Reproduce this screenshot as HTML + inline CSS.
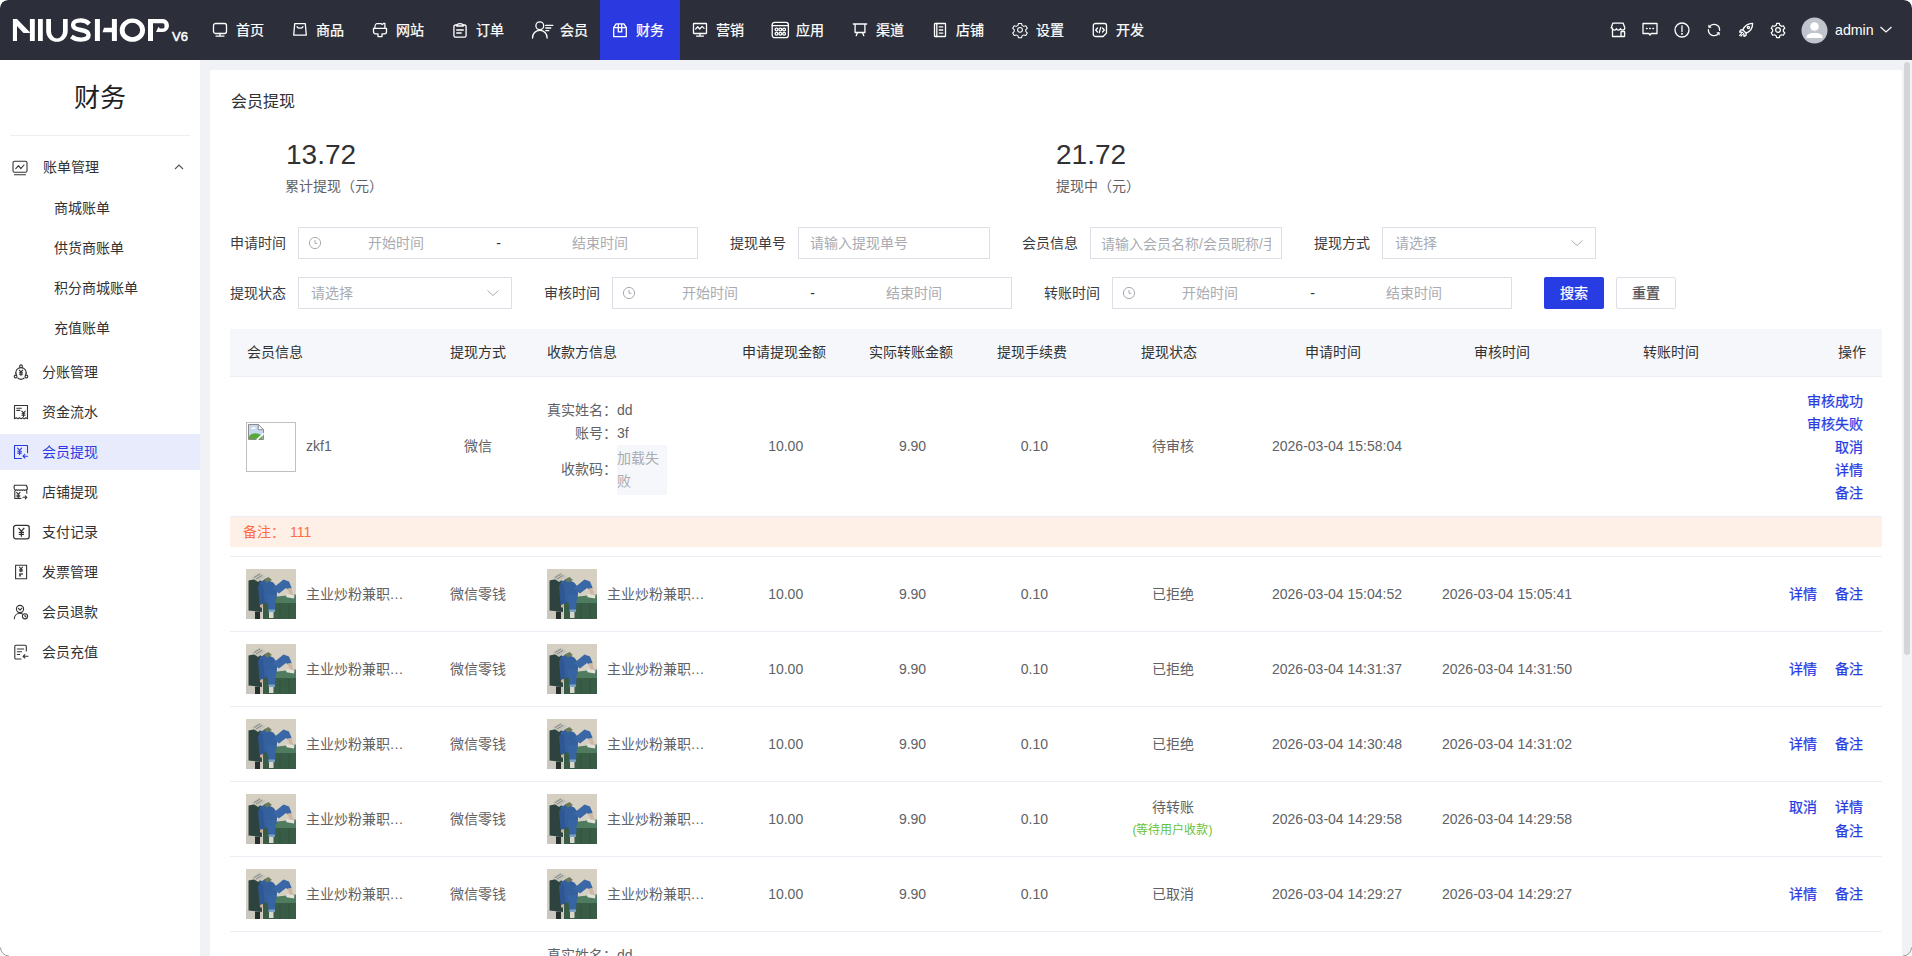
<!DOCTYPE html>
<html lang="zh-CN"><head><meta charset="utf-8"><title>NIUSHOP</title>
<style>
html,body{margin:0;padding:0;}
body{width:1912px;height:956px;overflow:hidden;position:relative;background:#ffffff;font-family:"Liberation Sans",sans-serif;}
.t{position:absolute;white-space:nowrap;}
.b{position:absolute;box-sizing:border-box;}
#app{position:absolute;left:0;top:0;width:1912px;height:956px;overflow:hidden;border-radius:8px;background:#fff;}
</style></head><body><div id="app">

<div class="b" style="left:0px;top:0px;width:1912px;height:60px;background:#2c2f3a;border-radius:8px 8px 0 0;"></div>
<div class="b" style="left:600px;top:0px;width:80px;height:60px;background:#2a3ae0;"></div>
<svg class="b" style="left:0px;top:0px;overflow:visible;" width="200" height="60" viewBox="0 0 200 60" fill="none"><g fill="#ffffff">
<path d="M12.9 18.9h4.1l12.9 13.3v.9h-6.4L17 25.9V41h-4.1z"/>
<path d="M29.9 18.9h4.9V41h-4.9z"/>
<path d="M38 18.9h4.8V41H38z"/>
<path d="M46.2 19.1V31a10.75 10.8 0 0 0 21.5 0V19.1H63V31a6 7.6 0 0 1-12 0V19.1z"/>
<path d="M89.3 23.9C87 21.5 84 20.4 80.6 20.4c-4.6 0-7.500 1.900-7.500 4.600c0 3.300 3.500 4.300 7.700 5c4.400.7 7.800 1.800 7.800 5c0 3-3.200 4.600-8 4.600c-3.800 0-7-1.300-9.200-3.100" stroke="#fff" stroke-width="4.4" fill="none"/>
<path d="M94.9 18.9h5V41h-5z"/>
<path d="M104 27.7h7.9v-8.8h5V41h-5v-8.7h-9.400z"/>
<path d="M132.35 18.5a12.65 11.65 0 1 1 0 23.3a12.65 11.65 0 1 1 0-23.3zm0 4.350a7.800 7.150 0 1 0 0 14.300a7.800 7.150 0 1 0 0-14.300z" fill-rule="evenodd"/>
<path d="M148 19.1h15a6 6.450 0 0 1 0 12.900h-7l2.500-5.200 1.300 1.800H163a1.600 2.700 0 0 0 0-5.400h-10V41h-5z"/>
</g></svg>
<div class="t" style="left:172px;top:27px;font-size:13px;line-height:20px;color:#ffffff;-webkit-text-stroke-width:0.5px;">V6</div>
<svg class="b" style="left:212px;top:22px;overflow:visible;" width="16" height="16" viewBox="-0.5 -0.5 16 16" fill="none"><rect x="1" y="1" width="13" height="10" rx="2" stroke="#ffffff" stroke-width="1.3" stroke-linecap="round" stroke-linejoin="round"/><path d="M7.5 11v2.5M3.5 13.6h8" stroke="#ffffff" stroke-width="1.3" stroke-linecap="round" stroke-linejoin="round"/></svg>
<div class="t" style="left:236px;top:19.5px;font-size:14px;line-height:20px;color:#ffffff;-webkit-text-stroke-width:0.25px;">首页</div>
<svg class="b" style="left:292px;top:22px;overflow:visible;" width="16" height="16" viewBox="-0.5 -0.5 16 16" fill="none"><path d="M2.2 1.2h10.6l1 11.4H1.2z" stroke="#ffffff" stroke-width="1.3" stroke-linecap="round" stroke-linejoin="round"/><path d="M4.6 4.2c.6 2 5.2 2 5.8 0" stroke="#ffffff" stroke-width="1.3" stroke-linecap="round" stroke-linejoin="round"/></svg>
<div class="t" style="left:316px;top:19.5px;font-size:14px;line-height:20px;color:#ffffff;-webkit-text-stroke-width:0.25px;">商品</div>
<svg class="b" style="left:372px;top:22px;overflow:visible;" width="16" height="16" viewBox="-0.5 -0.5 16 16" fill="none"><path d="M2.3 5.5c0-2.5 1-4.3 2-4.3h4.5c.6 1 1.4 1 2-.3h1.6v4.6" stroke="#ffffff" stroke-width="1.3" stroke-linecap="round" stroke-linejoin="round"/><path d="M1 5.8h13v3.5a2 2 0 0 1-2 2h-2.5v2.8h-4v-2.8H3a2 2 0 0 1-2-2z" stroke="#ffffff" stroke-width="1.3" stroke-linecap="round" stroke-linejoin="round"/></svg>
<div class="t" style="left:396px;top:19.5px;font-size:14px;line-height:20px;color:#ffffff;-webkit-text-stroke-width:0.25px;">网站</div>
<svg class="b" style="left:452px;top:22px;overflow:visible;" width="16" height="16" viewBox="-0.5 -0.5 16 16" fill="none"><path d="M4.2 2.5H3a1.6 1.6 0 0 0-1.6 1.6v9a1.6 1.6 0 0 0 1.6 1.6h9a1.6 1.6 0 0 0 1.6-1.6v-9A1.6 1.6 0 0 0 12 2.5h-1.2" stroke="#ffffff" stroke-width="1.3" stroke-linecap="round" stroke-linejoin="round"/><path d="M4.2 3.5c0-1.4 1-2.3 3.3-2.3s3.3.9 3.3 2.3z" stroke="#ffffff" stroke-width="1.3" stroke-linecap="round" stroke-linejoin="round"/><path d="M4.2 7.5h6.6M4.2 10.5h4.5" stroke="#ffffff" stroke-width="1.3" stroke-linecap="round" stroke-linejoin="round"/></svg>
<div class="t" style="left:476px;top:19.5px;font-size:14px;line-height:20px;color:#ffffff;-webkit-text-stroke-width:0.25px;">订单</div>
<svg class="b" style="left:528px;top:18px;overflow:visible;" width="28" height="24" viewBox="0 0 28 24" fill="none"><circle cx="11.8" cy="7.8" r="3.9" stroke="#ffffff" stroke-width="1.3" stroke-linecap="round" stroke-linejoin="round"/><path d="M4.5 20C4.5 15.5 7.5 12.4 11.8 12.4S19.1 15.5 19.1 20" stroke="#ffffff" stroke-width="1.3" stroke-linecap="round" stroke-linejoin="round"/><path d="M17.8 7.4h7M17.8 10h5M17.8 12.6h3" stroke="#ffffff" stroke-width="1.3" stroke-linecap="round" stroke-linejoin="round"/></svg>
<div class="t" style="left:560px;top:19.5px;font-size:14px;line-height:20px;color:#ffffff;-webkit-text-stroke-width:0.25px;">会员</div>
<svg class="b" style="left:612px;top:22px;overflow:visible;" width="16" height="16" viewBox="-0.5 -0.5 16 16" fill="none"><path d="M1.2 5.2L3.6 1.3h7.8l2.4 3.9v9H1.2z" stroke="#ffffff" stroke-width="1.3" stroke-linecap="round" stroke-linejoin="round"/><path d="M1.2 5.2h12.6M5.8 1.8v7.6h3.4V1.8" stroke="#ffffff" stroke-width="1.3" stroke-linecap="round" stroke-linejoin="round"/></svg>
<div class="t" style="left:636px;top:19.5px;font-size:14px;line-height:20px;color:#ffffff;-webkit-text-stroke-width:0.25px;">财务</div>
<svg class="b" style="left:692px;top:22px;overflow:visible;" width="16" height="16" viewBox="-0.5 -0.5 16 16" fill="none"><rect x="1" y="1" width="13" height="10" rx=".5" stroke="#ffffff" stroke-width="1.3" stroke-linecap="round" stroke-linejoin="round"/><path d="M3.2 6.5l2-2.2 2 2.2 2.4-2.6 2 2" stroke="#ffffff" stroke-width="1.3" stroke-linecap="round" stroke-linejoin="round"/><path d="M7.5 11v2M4 13.6h7" stroke="#ffffff" stroke-width="1.3" stroke-linecap="round" stroke-linejoin="round"/></svg>
<div class="t" style="left:716px;top:19.5px;font-size:14px;line-height:20px;color:#ffffff;-webkit-text-stroke-width:0.25px;">营销</div>
<svg class="b" style="left:770px;top:21px;overflow:visible;" width="20" height="18" viewBox="0 0 20 18" fill="none"><rect x="2.200" y="1.300" width="16.200" height="15.400" rx="2.500" stroke="#ffffff" stroke-width="1.3" stroke-linecap="round" stroke-linejoin="round"/><path d="M2.200 4.700h16.200" stroke="#ffffff" stroke-width="1.3" stroke-linecap="round" stroke-linejoin="round"/><circle cx="6.500" cy="8.500" r="1.400" stroke="#ffffff" stroke-width="1.3" stroke-linecap="round" stroke-linejoin="round"/><circle cx="10.300" cy="8.500" r="1.400" stroke="#ffffff" stroke-width="1.3" stroke-linecap="round" stroke-linejoin="round"/><circle cx="14.100" cy="8.500" r="1.400" stroke="#ffffff" stroke-width="1.3" stroke-linecap="round" stroke-linejoin="round"/><circle cx="6.500" cy="12.800" r="1.400" stroke="#ffffff" stroke-width="1.3" stroke-linecap="round" stroke-linejoin="round"/><circle cx="10.300" cy="12.800" r="1.400" stroke="#ffffff" stroke-width="1.3" stroke-linecap="round" stroke-linejoin="round"/><circle cx="14.100" cy="12.800" r="1.400" stroke="#ffffff" stroke-width="1.3" stroke-linecap="round" stroke-linejoin="round"/></svg>
<div class="t" style="left:796px;top:19.5px;font-size:14px;line-height:20px;color:#ffffff;-webkit-text-stroke-width:0.25px;">应用</div>
<svg class="b" style="left:852px;top:22px;overflow:visible;" width="16" height="16" viewBox="-0.5 -0.5 16 16" fill="none"><path d="M.8 1.5h13.4M2.6 1.5v8.5h9.8V1.5M5 10.2l-1.3 3M10 10.2l1.3 3" stroke="#ffffff" stroke-width="1.3" stroke-linecap="round" stroke-linejoin="round"/></svg>
<div class="t" style="left:876px;top:19.5px;font-size:14px;line-height:20px;color:#ffffff;-webkit-text-stroke-width:0.25px;">渠道</div>
<svg class="b" style="left:932px;top:22px;overflow:visible;" width="16" height="16" viewBox="-0.5 -0.5 16 16" fill="none"><rect x="2" y="1" width="11" height="13" rx=".4" stroke="#ffffff" stroke-width="1.3" stroke-linecap="round" stroke-linejoin="round"/><path d="M4.3 1v13" stroke="#ffffff" stroke-width="1.3" stroke-linecap="round" stroke-linejoin="round"/><path d="M6.8 4.4h3.5M6.8 7.5h3.5M6.8 10.6h3.5" stroke="#ffffff" stroke-width="1.3" stroke-linecap="round" stroke-linejoin="round"/></svg>
<div class="t" style="left:956px;top:19.5px;font-size:14px;line-height:20px;color:#ffffff;-webkit-text-stroke-width:0.25px;">店铺</div>
<svg class="b" style="left:1012px;top:22px;overflow:visible;" width="16" height="16" viewBox="-0.5 -0.5 16 16" fill="none"><path d="M6 1.2h3l.5 2 1.8 1 2-.6 1.5 2.6-1.5 1.4v2l1.5 1.4-1.5 2.6-2-.6-1.8 1-.5 2H6l-.5-2-1.8-1-2 .6L.2 11l1.5-1.4v-2L.2 6.2l1.5-2.6 2 .6 1.8-1z" transform="translate(0 -.2) scale(1 .97)" stroke="#ffffff" stroke-width="1.050" stroke-linejoin="round"/><circle cx="7.5" cy="7.3" r="2.4" stroke="#ffffff" stroke-width="1.050" stroke-linejoin="round"/></svg>
<div class="t" style="left:1036px;top:19.5px;font-size:14px;line-height:20px;color:#ffffff;-webkit-text-stroke-width:0.25px;">设置</div>
<svg class="b" style="left:1092px;top:22px;overflow:visible;" width="16" height="16" viewBox="-0.5 -0.5 16 16" fill="none"><path d="M2.8 1h9.2a2 2 0 0 1 2 2v7.6L10.6 14H2.8a2 2 0 0 1-2-2V3a2 2 0 0 1 2-2z" stroke="#ffffff" stroke-width="1.3" stroke-linecap="round" stroke-linejoin="round"/><path d="M5 5.5L3.2 7.5 5 9.5M10 5.5l1.8 2L10 9.5M8.2 4.8l-1.4 5.4" stroke="#ffffff" stroke-width="1.3" stroke-linecap="round" stroke-linejoin="round"/></svg>
<div class="t" style="left:1116px;top:19.5px;font-size:14px;line-height:20px;color:#ffffff;-webkit-text-stroke-width:0.25px;">开发</div>
<svg class="b" style="left:1610px;top:22px;overflow:visible;" width="16" height="16" viewBox="0 0 16 16" fill="none"><path d="M2.5 6.5v8h8" stroke="#ffffff" stroke-width="1.3" stroke-linecap="round" stroke-linejoin="round"/><path d="M1.2 5.8l1.6-4.6h10.4l1.6 4.6c0 1.4-1 2.3-2.2 2.3-1 0-1.8-.7-2-1.5-.3.8-1.2 1.5-2.2 1.5S6.6 7.400 6.4 6.6c-.2.8-1 1.5-2 1.5-1.3 0-2.200-.9-2.200-2.300z" stroke="#ffffff" stroke-width="1.3" stroke-linecap="round" stroke-linejoin="round"/><rect x="11" y="9.5" width="3.6" height="5" rx=".6" stroke="#ffffff" stroke-width="1.3" stroke-linecap="round" stroke-linejoin="round"/></svg>
<svg class="b" style="left:1642px;top:22px;overflow:visible;" width="16" height="16" viewBox="0 0 16 16" fill="none"><path d="M1 1.5h14v10H9.2L8 13l-1.2-1.5H1z" stroke="#ffffff" stroke-width="1.3" stroke-linecap="round" stroke-linejoin="round"/><path d="M4.6 6.5h.4M7.8 6.5h.4M11 6.5h.4" stroke="#fff" stroke-width="1.6" stroke-linecap="round"/></svg>
<svg class="b" style="left:1674px;top:22px;overflow:visible;" width="16" height="16" viewBox="0 0 16 16" fill="none"><circle cx="8" cy="8" r="7" stroke="#ffffff" stroke-width="1.3" stroke-linecap="round" stroke-linejoin="round"/><path d="M8 3.8v5.6" stroke="#ffffff" stroke-width="1.3" stroke-linecap="round" stroke-linejoin="round"/><circle cx="8" cy="11.8" r=".4" stroke="#ffffff" stroke-width="1.3" stroke-linecap="round" stroke-linejoin="round"/></svg>
<svg class="b" style="left:1706px;top:22px;overflow:visible;" width="16" height="16" viewBox="0 0 16 16" fill="none"><path d="M13.600 8.300A5.700 5.700 0 0 0 3.400 4.600" stroke="#ffffff" stroke-width="1.3" stroke-linecap="round" stroke-linejoin="round"/><path d="M2.400 7.700a5.700 5.700 0 0 0 10.200 3.700" stroke="#ffffff" stroke-width="1.3" stroke-linecap="round" stroke-linejoin="round"/><path d="M2.200 2.600l.3 3.300 3.200-.5z" fill="#fff"/><path d="M13.800 13.400l-.3-3.300-3.200.5z" fill="#fff"/></svg>
<svg class="b" style="left:1738px;top:22px;overflow:visible;" width="16" height="16" viewBox="0 0 16 16" fill="none"><path d="M14.600 1.400C10.600 1.300 6.800 3.700 4.800 7.800l3.400 3.400c4.100-2 6.500-5.800 6.400-9.800z" stroke="#ffffff" stroke-width="1.3" stroke-linecap="round" stroke-linejoin="round"/><path d="M4.800 7.800l-2.200.2-1 2 3 .3M8.200 11.200l-.2 2.200-2 1-.3-3" stroke="#ffffff" stroke-width="1.3" stroke-linecap="round" stroke-linejoin="round"/><circle cx="10.400" cy="5.600" r="1.100" stroke="#ffffff" stroke-width="1.3" stroke-linecap="round" stroke-linejoin="round"/><path d="M3.400 11.600l-1.800 1.800M4.400 12.600l-1.500 1.500" stroke="#ffffff" stroke-width="1.3" stroke-linecap="round" stroke-linejoin="round"/></svg>
<svg class="b" style="left:1770px;top:22px;overflow:visible;" width="16" height="16" viewBox="0 0 16 16" fill="none"><g transform="translate(8 8) scale(.88) translate(-8 -8.400)"><path d="M6.400 1h3.200l.5 2.100 1.900 1.100 2.100-.6 1.600 2.800-1.600 1.500v2.200l1.600 1.500-1.600 2.800-2.100-.6-1.900 1.100-.5 2.100H6.400l-.5-2.100-1.900-1.100-2.100.6L.300 11.600l1.600-1.500V7.900L.300 6.400l1.600-2.800 2.100.6 1.900-1.100z" stroke="#fff" stroke-width="1.400" stroke-linejoin="round"/><circle cx="8" cy="8.400" r="2.700" stroke="#fff" stroke-width="1.400"/></g></svg>
<svg class="b" style="left:1801px;top:17px;overflow:visible;" width="27" height="27" viewBox="0 0 27 27" fill="none"><circle cx="13.5" cy="13.5" r="13" fill="#c0c4cc"/><circle cx="13.5" cy="9.5" r="4.3" fill="#fff"/><path d="M5.5 20.5c0-3 2.500-4.500 8-4.500s8 1.500 8 4.500v.5H5.5z" fill="#fff"/></svg>
<div class="t" style="left:1835px;top:19.5px;font-size:14.2px;line-height:20px;color:#ffffff;">admin</div>
<svg class="b" style="left:1879px;top:25px;overflow:visible;" width="14" height="10" viewBox="0 0 14 10" fill="none"><path d="M1.5 2l5.500 5 5.500-5" stroke="#fff" stroke-width="1.2" fill="none"/></svg>
<div class="b" style="left:200px;top:60px;width:1712px;height:896px;background:#f0f2f5;"></div>
<div class="t" style="left:0px;top:77.5px;font-size:26px;line-height:40px;color:#1f1f1f;width:200px;text-align:center;">财务</div>
<div class="b" style="left:10px;top:135px;width:180px;height:1px;background:#eceef4;"></div>
<svg class="b" style="left:12px;top:160px;overflow:visible;" width="16" height="16" viewBox="0 0 16 16" fill="none"><rect x="1" y="1.2" width="14" height="11" rx="1.5" stroke="#333333" stroke-width="1.1" stroke-linecap="round" stroke-linejoin="round"/><path d="M3.8 8.6l2.700-3 2.300 3 3.200-3.600" stroke="#333333" stroke-width="1.1" stroke-linecap="round" stroke-linejoin="round"/><path d="M2.500 14.800h11" stroke="#333333" stroke-width="1.1" stroke-linecap="round" stroke-linejoin="round"/></svg>
<div class="t" style="left:43px;top:157.0px;font-size:14px;line-height:20px;color:#303133;">账单管理</div>
<svg class="b" style="left:174px;top:163px;overflow:visible;" width="10" height="8" viewBox="0 0 10 8" fill="none"><path d="M1 6l4-4 4 4" stroke="#555" stroke-width="1.1" fill="none"/></svg>
<div class="t" style="left:54px;top:197.5px;font-size:14px;line-height:20px;color:#303133;">商城账单</div>
<div class="t" style="left:54px;top:237.5px;font-size:14px;line-height:20px;color:#303133;">供货商账单</div>
<div class="t" style="left:54px;top:277.5px;font-size:14px;line-height:20px;color:#303133;">积分商城账单</div>
<div class="t" style="left:54px;top:317.5px;font-size:14px;line-height:20px;color:#303133;">充值账单</div>
<svg class="b" style="left:13px;top:364px;overflow:visible;" width="16" height="16" viewBox="0 0 16 16" fill="none"><path d="M8 3.600a5 5 0 0 1 4.600 7.400M3.400 11A5 5 0 0 1 8 3.600M4.800 14a5 5 0 0 0 6.400 0" stroke="#333333" stroke-width="1.1" stroke-linecap="round" stroke-linejoin="round"/><circle cx="8" cy="2.300" r="1.400" stroke="#333333" stroke-width="1.1" stroke-linecap="round" stroke-linejoin="round"/><circle cx="2.600" cy="12.500" r="1.400" stroke="#333333" stroke-width="1.1" stroke-linecap="round" stroke-linejoin="round"/><circle cx="13.400" cy="12.500" r="1.400" stroke="#333333" stroke-width="1.1" stroke-linecap="round" stroke-linejoin="round"/><path d="M6.3 6.2L8 8l1.7-1.8M8 8v3.6M6.4 8.8h3.2M6.4 10.300h3.2" stroke="#333333" stroke-width="1.1" stroke-linecap="round" stroke-linejoin="round"/></svg>
<div class="t" style="left:41.5px;top:361.5px;font-size:14px;line-height:20px;color:#303133;">分账管理</div>
<svg class="b" style="left:13px;top:404px;overflow:visible;" width="16" height="16" viewBox="0 0 16 16" fill="none"><path d="M1.500 1.500h13v13.200l-1.600-1-1.600 1-1.600-1-1.600 1-1.600-1-1.600 1-1.600-1-1.800 1z" stroke="#333333" stroke-width="1.1" stroke-linecap="round" stroke-linejoin="round"/><path d="M3.8 4.200h4.600M3.8 6.400h3" stroke="#333333" stroke-width="1.1" stroke-linecap="round" stroke-linejoin="round"/><path d="M8.800 7.200L10.500 9l1.700-1.800M10.500 9v3.400M9 9.800h3M9 11.200h3" stroke="#333333" stroke-width="1.1" stroke-linecap="round" stroke-linejoin="round"/></svg>
<div class="t" style="left:41.5px;top:401.5px;font-size:14px;line-height:20px;color:#303133;">资金流水</div>
<div class="b" style="left:0px;top:434px;width:200px;height:36px;background:#e8ebfb;"></div>
<svg class="b" style="left:13px;top:444px;overflow:visible;" width="16" height="16" viewBox="0 0 16 16" fill="none"><path d="M14.500 8.800V1.500h-13v13h7" stroke="#2a3ae0" stroke-width="1.1" stroke-linecap="round" stroke-linejoin="round"/><path d="M4.600 4.200L6.600 6.300l2-2.100M6.600 6.300v4.500M4.700 7.300h3.800M4.700 9.100h3.800" stroke="#2a3ae0" stroke-width="1.1" stroke-linecap="round" stroke-linejoin="round"/><path d="M14.600 12.200h-4.600M11.800 10.400L10 12.200l1.800 1.800" stroke="#2a3ae0" stroke-width="1.1" stroke-linecap="round" stroke-linejoin="round"/></svg>
<div class="t" style="left:41.5px;top:441.5px;font-size:14px;line-height:20px;color:#2a3ae0;">会员提现</div>
<svg class="b" style="left:13px;top:484px;overflow:visible;" width="16" height="16" viewBox="0 0 16 16" fill="none"><path d="M1.500 1.300H13.300C14.300 2.600 14.600 5 13.600 6.500Q12.500 5.300 11.400 6.500Q10.300 5.300 9.200 6.500Q8.100 5.300 7 6.500Q5.900 5.300 4.800 6.500Q3.700 5.300 2.600 6.500C.9 5.200 1 2.600 1.500 1.300z" stroke="#333333" stroke-width="1.1" stroke-linecap="round" stroke-linejoin="round"/><path d="M1.800 7v7.500H8M13.800 7.300v2" stroke="#333333" stroke-width="1.1" stroke-linecap="round" stroke-linejoin="round"/><path d="M3.600 8.400L5.300 10.300 7 8.400M5.300 10.300v4M3.800 11.300h3M3.800 12.800h3M10 13.300h3.800M12.300 11.800l1.500 1.500-1.500 1.500" stroke="#333333" stroke-width="1.1" stroke-linecap="round" stroke-linejoin="round"/></svg>
<div class="t" style="left:41.5px;top:481.5px;font-size:14px;line-height:20px;color:#303133;">店铺提现</div>
<svg class="b" style="left:13px;top:524px;overflow:visible;" width="16" height="16" viewBox="0 0 16 16" fill="none"><rect x=".600" y="1.400" width="15.600" height="13.400" rx="2.200" stroke="#333" stroke-width="1.300"/><path d="M5.500 3.800L8.400 7.200l2.900-3.400M8.400 7.200v5.600M5.800 8.400h5.200M5.800 10.400h5.200" stroke="#333" stroke-width="1.300"/></svg>
<div class="t" style="left:41.5px;top:521.5px;font-size:14px;line-height:20px;color:#303133;">支付记录</div>
<svg class="b" style="left:13px;top:564px;overflow:visible;" width="16" height="16" viewBox="0 0 16 16" fill="none"><path d="M2.600 1.300h11v13.400h-11z" stroke="#333333" stroke-width="1.1" stroke-linecap="round" stroke-linejoin="round"/><path d="M6.500 3.200L8 4.800l1.500-1.600M8 4.800v3M6.600 5.800h2.800M6.600 7h2.800" stroke="#333333" stroke-width="1.1" stroke-linecap="round" stroke-linejoin="round"/><path d="M6 9.200h4v1.600H8v1.800H6z" fill="#555" stroke="none"/></svg>
<div class="t" style="left:41.5px;top:561.5px;font-size:14px;line-height:20px;color:#303133;">发票管理</div>
<svg class="b" style="left:13px;top:604px;overflow:visible;" width="16" height="16" viewBox="0 0 16 16" fill="none"><circle cx="7" cy="5" r="3.600" stroke="#333333" stroke-width="1.1" stroke-linecap="round" stroke-linejoin="round"/><path d="M1.300 14.800c.2-3.300 2.500-5.600 5.500-5.600 1 0 1.800.2 2.600.7" stroke="#333333" stroke-width="1.1" stroke-linecap="round" stroke-linejoin="round"/><circle cx="12" cy="12.300" r="2.600" stroke="#333333" stroke-width="1.1" stroke-linecap="round" stroke-linejoin="round"/><path d="M12 11v1.300l.9.6" stroke="#333333" stroke-width="1.1" stroke-linecap="round" stroke-linejoin="round"/><path d="M5.300 4.300L7 6l2-1.800" stroke="#333333" stroke-width="1.1" stroke-linecap="round" stroke-linejoin="round"/></svg>
<div class="t" style="left:41.5px;top:601.5px;font-size:14px;line-height:20px;color:#303133;">会员退款</div>
<svg class="b" style="left:13px;top:644px;overflow:visible;" width="16" height="16" viewBox="0 0 16 16" fill="none"><path d="M13.300 7V2.500a1.200 1.200 0 0 0-1.200-1.200H3a1.200 1.200 0 0 0-1.200 1.200v11.300A1.200 1.200 0 0 0 3 15h5" stroke="#333333" stroke-width="1.1" stroke-linecap="round" stroke-linejoin="round"/><path d="M4.300 5h6.300M4.300 7.800h4.200M4.300 10.500h2.400" stroke="#333333" stroke-width="1.1" stroke-linecap="round" stroke-linejoin="round"/><path d="M15 12.300h-4.800M11.800 10.600l-1.700 1.700 1.700 1.700" stroke="#333333" stroke-width="1.1" stroke-linecap="round" stroke-linejoin="round"/></svg>
<div class="t" style="left:41.5px;top:641.5px;font-size:14px;line-height:20px;color:#303133;">会员充值</div>
<div class="b" style="left:210px;top:70px;width:1692px;height:900px;background:#ffffff;"></div>
<div class="b" style="left:1904px;top:62px;width:6px;height:593px;background:#d4d5d9;border-radius:3px;"></div>
<div class="t" style="left:231px;top:92.2px;font-size:16px;line-height:20px;color:#303133;">会员提现</div>
<div class="t" style="left:286px;top:135px;font-size:28px;line-height:40px;color:#303133;">13.72</div>
<div class="t" style="left:285px;top:175.5px;font-size:14px;line-height:20px;color:#606266;">累计提现（元）</div>
<div class="t" style="left:1056px;top:135px;font-size:28px;line-height:40px;color:#303133;">21.72</div>
<div class="t" style="left:1056px;top:175.5px;font-size:14px;line-height:20px;color:#606266;">提现中（元）</div>
<div class="t" style="left:166px;top:232.5px;font-size:14px;line-height:20px;color:#3a3b3f;width:120px;text-align:right;">申请时间</div>
<div class="b" style="left:298px;top:227px;width:400px;height:32px;border:1px solid #dcdfe6;border-radius:0;background:#fff;"></div>
<svg class="b" style="left:308px;top:236px;overflow:visible;" width="14" height="14" viewBox="0 0 14 14" fill="none"><circle cx="7" cy="7" r="5.600" stroke="#a8abb2" stroke-width="1"/><path d="M7 4v3.300h2.400" stroke="#a8abb2" stroke-width="1" fill="none"/></svg>
<div class="t" style="left:316.0px;top:232.5px;font-size:14px;line-height:20px;color:#a8abb2;width:160px;text-align:center;">开始时间</div>
<div class="t" style="left:488.5px;top:232.5px;font-size:14px;line-height:20px;color:#303133;width:20px;text-align:center;">-</div>
<div class="t" style="left:520.0px;top:232.5px;font-size:14px;line-height:20px;color:#a8abb2;width:160px;text-align:center;">结束时间</div>
<div class="t" style="left:666px;top:232.5px;font-size:14px;line-height:20px;color:#3a3b3f;width:120px;text-align:right;">提现单号</div>
<div class="b" style="left:798px;top:227px;width:192px;height:32px;border:1px solid #dcdfe6;border-radius:0;background:#fff;"></div>
<div class="t" style="left:810px;top:232.5px;font-size:14px;line-height:20px;color:#a8abb2;">请输入提现单号</div>
<div class="t" style="left:958px;top:232.5px;font-size:14px;line-height:20px;color:#3a3b3f;width:120px;text-align:right;">会员信息</div>
<div class="b" style="left:1090px;top:227px;width:192px;height:32px;border:1px solid #dcdfe6;border-radius:0;background:#fff;"></div>
<div class="t" style="left:1101px;top:233.5px;width:170px;overflow:hidden;font-size:14px;line-height:20px;color:#a8abb2">请输入会员名称/会员昵称/手机号</div>
<div class="t" style="left:1250px;top:232.5px;font-size:14px;line-height:20px;color:#3a3b3f;width:120px;text-align:right;">提现方式</div>
<div class="b" style="left:1382px;top:227px;width:214px;height:32px;border:1px solid #dcdfe6;border-radius:0;background:#fff;"></div>
<div class="t" style="left:1395px;top:232.5px;font-size:14px;line-height:20px;color:#a8abb2;">请选择</div>
<svg class="b" style="left:1570px;top:239px;overflow:visible;" width="14" height="8" viewBox="0 0 14 8" fill="none"><path d="M1.500 1.500l5.500 5 5.500-5" stroke="#a8abb2" stroke-width="1" fill="none"/></svg>
<div class="t" style="left:166px;top:282.5px;font-size:14px;line-height:20px;color:#3a3b3f;width:120px;text-align:right;">提现状态</div>
<div class="b" style="left:298px;top:277px;width:214px;height:32px;border:1px solid #dcdfe6;border-radius:0;background:#fff;"></div>
<div class="t" style="left:311px;top:282.5px;font-size:14px;line-height:20px;color:#a8abb2;">请选择</div>
<svg class="b" style="left:486px;top:289px;overflow:visible;" width="14" height="8" viewBox="0 0 14 8" fill="none"><path d="M1.500 1.500l5.500 5 5.500-5" stroke="#a8abb2" stroke-width="1" fill="none"/></svg>
<div class="t" style="left:480px;top:282.5px;font-size:14px;line-height:20px;color:#3a3b3f;width:120px;text-align:right;">审核时间</div>
<div class="b" style="left:612px;top:277px;width:400px;height:32px;border:1px solid #dcdfe6;border-radius:0;background:#fff;"></div>
<svg class="b" style="left:622px;top:286px;overflow:visible;" width="14" height="14" viewBox="0 0 14 14" fill="none"><circle cx="7" cy="7" r="5.600" stroke="#a8abb2" stroke-width="1"/><path d="M7 4v3.300h2.400" stroke="#a8abb2" stroke-width="1" fill="none"/></svg>
<div class="t" style="left:630.0px;top:282.5px;font-size:14px;line-height:20px;color:#a8abb2;width:160px;text-align:center;">开始时间</div>
<div class="t" style="left:802.5px;top:282.5px;font-size:14px;line-height:20px;color:#303133;width:20px;text-align:center;">-</div>
<div class="t" style="left:834.0px;top:282.5px;font-size:14px;line-height:20px;color:#a8abb2;width:160px;text-align:center;">结束时间</div>
<div class="t" style="left:980px;top:282.5px;font-size:14px;line-height:20px;color:#3a3b3f;width:120px;text-align:right;">转账时间</div>
<div class="b" style="left:1112px;top:277px;width:400px;height:32px;border:1px solid #dcdfe6;border-radius:0;background:#fff;"></div>
<svg class="b" style="left:1122px;top:286px;overflow:visible;" width="14" height="14" viewBox="0 0 14 14" fill="none"><circle cx="7" cy="7" r="5.600" stroke="#a8abb2" stroke-width="1"/><path d="M7 4v3.300h2.400" stroke="#a8abb2" stroke-width="1" fill="none"/></svg>
<div class="t" style="left:1130.0px;top:282.5px;font-size:14px;line-height:20px;color:#a8abb2;width:160px;text-align:center;">开始时间</div>
<div class="t" style="left:1302.5px;top:282.5px;font-size:14px;line-height:20px;color:#303133;width:20px;text-align:center;">-</div>
<div class="t" style="left:1334.0px;top:282.5px;font-size:14px;line-height:20px;color:#a8abb2;width:160px;text-align:center;">结束时间</div>
<div class="b" style="left:1544px;top:277px;width:60px;height:32px;background:#273ce2;border-radius:2px;"></div>
<div class="t" style="left:1544.0px;top:282.5px;font-size:14px;line-height:20px;color:#ffffff;width:60px;text-align:center;-webkit-text-stroke-width:0.25px;">搜索</div>
<div class="b" style="left:1616px;top:277px;width:60px;height:32px;border:1px solid #dcdfe6;border-radius:2px;background:#fff;"></div>
<div class="t" style="left:1616.0px;top:282.5px;font-size:14px;line-height:20px;color:#505257;width:60px;text-align:center;-webkit-text-stroke-width:0.25px;">重置</div>
<div class="b" style="left:230px;top:329px;width:1652px;height:48px;background:#f5f7fa;border-bottom:1px solid #ebeef5;"></div>
<div class="t" style="left:247px;top:341.5px;font-size:14px;line-height:20px;color:#303133;">会员信息</div>
<div class="t" style="left:328.0px;top:341.5px;font-size:14px;line-height:20px;color:#303133;width:300px;text-align:center;">提现方式</div>
<div class="t" style="left:547px;top:341.5px;font-size:14px;line-height:20px;color:#303133;">收款方信息</div>
<div class="t" style="left:634.0px;top:341.5px;font-size:14px;line-height:20px;color:#303133;width:300px;text-align:center;">申请提现金额</div>
<div class="t" style="left:760.5px;top:341.5px;font-size:14px;line-height:20px;color:#303133;width:300px;text-align:center;">实际转账金额</div>
<div class="t" style="left:882.0px;top:341.5px;font-size:14px;line-height:20px;color:#303133;width:300px;text-align:center;">提现手续费</div>
<div class="t" style="left:1019.0px;top:341.5px;font-size:14px;line-height:20px;color:#303133;width:300px;text-align:center;">提现状态</div>
<div class="t" style="left:1182.7px;top:341.5px;font-size:14px;line-height:20px;color:#303133;width:300px;text-align:center;">申请时间</div>
<div class="t" style="left:1351.7px;top:341.5px;font-size:14px;line-height:20px;color:#303133;width:300px;text-align:center;">审核时间</div>
<div class="t" style="left:1521.0px;top:341.5px;font-size:14px;line-height:20px;color:#303133;width:300px;text-align:center;">转账时间</div>
<div class="t" style="left:1566px;top:341.5px;font-size:14px;line-height:20px;color:#303133;width:300px;text-align:right;">操作</div>
<div class="b" style="left:246px;top:422px;width:50px;height:50px;border:1px solid #c0c0c0;background:#fff;"></div>
<svg class="b" style="left:248px;top:424px;overflow:visible;" width="17" height="17" viewBox="0 0 17 17" fill="none"><path d="M.5.5h9.800l5.200 5.200v9.800H.5z" fill="#c5d9f1" stroke="#8c8c8c" stroke-width="1"/><path d="M10.300.5v5.200h5.200z" fill="#fff" stroke="#8c8c8c" stroke-width="1" stroke-linejoin="round"/><ellipse cx="5.500" cy="4.300" rx="2.200" ry="1" fill="#fff"/><path d="M1 15V12.500C3 9.300 7.500 8.300 11.800 10.200L14.500 12v3z" fill="#5aa83c"/><path d="M8.800 15.800l7-6.500" stroke="#fff" stroke-width="1.600"/></svg>
<div class="t" style="left:306px;top:436.0px;font-size:14px;line-height:20px;color:#606266;">zkf1</div>
<div class="t" style="left:328.0px;top:436.0px;font-size:14px;line-height:20px;color:#606266;width:300px;text-align:center;">微信</div>
<div class="t" style="left:517px;top:399.5px;font-size:14px;line-height:20px;color:#606266;width:100px;text-align:right;">真实姓名：</div>
<div class="t" style="left:617px;top:399.5px;font-size:14px;line-height:20px;color:#606266;">dd</div>
<div class="t" style="left:517px;top:422.5px;font-size:14px;line-height:20px;color:#606266;width:100px;text-align:right;">账号：</div>
<div class="t" style="left:617px;top:422.5px;font-size:14px;line-height:20px;color:#606266;">3f</div>
<div class="t" style="left:517px;top:458.5px;font-size:14px;line-height:20px;color:#606266;width:100px;text-align:right;">收款码：</div>
<div class="b" style="left:617px;top:445px;width:50px;height:50px;background:#f5f7fa;"></div>
<div class="t" style="left:617px;top:447.9px;font-size:14px;line-height:20px;color:#a8abb2;">加载失</div>
<div class="t" style="left:617px;top:470.5px;font-size:14px;line-height:20px;color:#a8abb2;">败</div>
<div class="t" style="left:635.7px;top:436.0px;font-size:14px;line-height:20px;color:#606266;width:300px;text-align:center;">10.00</div>
<div class="t" style="left:762.5px;top:436.0px;font-size:14px;line-height:20px;color:#606266;width:300px;text-align:center;">9.90</div>
<div class="t" style="left:884.4000000000001px;top:436.0px;font-size:14px;line-height:20px;color:#606266;width:300px;text-align:center;">0.10</div>
<div class="t" style="left:1022.5px;top:436.0px;font-size:14px;line-height:20px;color:#606266;width:300px;text-align:center;">待审核</div>
<div class="t" style="left:1187.0px;top:436.0px;font-size:14px;line-height:20px;color:#606266;width:300px;text-align:center;">2026-03-04 15:58:04</div>
<div class="t" style="left:1563px;top:390.5px;font-size:14px;line-height:20px;color:#273ce2;width:300px;text-align:right;-webkit-text-stroke-width:0.25px;">审核成功</div>
<div class="t" style="left:1563px;top:413.5px;font-size:14px;line-height:20px;color:#273ce2;width:300px;text-align:right;-webkit-text-stroke-width:0.25px;">审核失败</div>
<div class="t" style="left:1563px;top:436.5px;font-size:14px;line-height:20px;color:#273ce2;width:300px;text-align:right;-webkit-text-stroke-width:0.25px;">取消</div>
<div class="t" style="left:1563px;top:459.5px;font-size:14px;line-height:20px;color:#273ce2;width:300px;text-align:right;-webkit-text-stroke-width:0.25px;">详情</div>
<div class="t" style="left:1563px;top:482.5px;font-size:14px;line-height:20px;color:#273ce2;width:300px;text-align:right;-webkit-text-stroke-width:0.25px;">备注</div>
<div class="b" style="left:230px;top:516px;width:1652px;height:1px;background:#ebeef5;"></div>
<div class="b" style="left:230px;top:517px;width:1652px;height:30px;background:#fef0e6;"></div>
<div class="t" style="left:243px;top:521.5px;font-size:14px;line-height:20px;color:#ff6d48;">备注：</div>
<div class="t" style="left:290px;top:521.5px;font-size:14px;line-height:20px;color:#ff6d48;">111</div>
<div class="b" style="left:230px;top:556px;width:1652px;height:1px;background:#ebeef5;"></div>
<svg class="b" style="left:246px;top:569px;overflow:visible;" width="50" height="50" viewBox="0 0 50 50" fill="none">
<rect width="50" height="50" fill="#d6d0c3"/>
<path d="M0 41l16 2v7H0z" fill="#cac7be"/>
<path d="M2.500 11.500L12 9.500 16 12.500V43L2.500 41.500z" fill="#2c433f"/>
<path d="M9 42.500h5V50H9z" fill="#27302d"/>
<path d="M5.500 8.500l8-5 6.500 3.800-8 5.800z" fill="#c4c3b9"/>
<path d="M8 8.600l6-3.600M10 10l6-3.600" stroke="#7d807a" stroke-width=".9"/>
<path d="M17 30l33-3.500V50H17z" fill="#385c45"/>
<path d="M29 27.800l21-2.300v8.500H29z" fill="#4f7b5e"/>
<path d="M34 36v14M43 35v15" stroke="#2f4d3a" stroke-width=".7"/>
<path d="M13.500 13l6.500-3 7.500 3.700 4 5.300-1 11-9.500 3.800-7-2z" fill="#35609e"/>
<path d="M12 16.500l5-1.500 1.500 20-5 .8z" fill="#2f5793"/>
<circle cx="15.500" cy="37" r="1.700" fill="#cfae96"/>
<path d="M20.500 26h9.500l-1 16.500-6 .5z" fill="#3764a3"/>
<path d="M22.500 40.500h6.500l-.2 2.500h-6.200z" fill="#7fa3c6"/>
<path d="M26.500 19.500l11-9 5.500 2 2.500 6-1.500 3.500-4-3-7 5.500z" fill="#3a67a6"/>
<path d="M41.500 19.500l4-.5 1.500 6-3 1.500z" fill="#cdb7a3"/>
<path d="M40 25l8.500 1.200-.5 3.300-7.500-1.200z" fill="#e3e0d8"/>
<path d="M17.500 10.500l5-2.500 3.500 3-5 2.500z" fill="#6b7a5a"/>
<path d="M23 43h4.500v6H23z" fill="#d9d6cd"/>
</svg>
<div class="t" style="left:305.5px;top:583.5px;font-size:14px;line-height:20px;color:#606266;">主业炒粉兼职…</div>
<div class="t" style="left:328.0px;top:583.5px;font-size:14px;line-height:20px;color:#606266;width:300px;text-align:center;">微信零钱</div>
<svg class="b" style="left:547px;top:569px;overflow:visible;" width="50" height="50" viewBox="0 0 50 50" fill="none">
<rect width="50" height="50" fill="#d6d0c3"/>
<path d="M0 41l16 2v7H0z" fill="#cac7be"/>
<path d="M2.500 11.500L12 9.500 16 12.500V43L2.500 41.500z" fill="#2c433f"/>
<path d="M9 42.500h5V50H9z" fill="#27302d"/>
<path d="M5.500 8.500l8-5 6.500 3.800-8 5.800z" fill="#c4c3b9"/>
<path d="M8 8.600l6-3.600M10 10l6-3.600" stroke="#7d807a" stroke-width=".9"/>
<path d="M17 30l33-3.500V50H17z" fill="#385c45"/>
<path d="M29 27.800l21-2.300v8.500H29z" fill="#4f7b5e"/>
<path d="M34 36v14M43 35v15" stroke="#2f4d3a" stroke-width=".7"/>
<path d="M13.500 13l6.500-3 7.500 3.700 4 5.300-1 11-9.500 3.800-7-2z" fill="#35609e"/>
<path d="M12 16.500l5-1.500 1.500 20-5 .8z" fill="#2f5793"/>
<circle cx="15.500" cy="37" r="1.700" fill="#cfae96"/>
<path d="M20.500 26h9.500l-1 16.500-6 .5z" fill="#3764a3"/>
<path d="M22.500 40.500h6.500l-.2 2.500h-6.200z" fill="#7fa3c6"/>
<path d="M26.500 19.500l11-9 5.500 2 2.500 6-1.500 3.500-4-3-7 5.500z" fill="#3a67a6"/>
<path d="M41.500 19.500l4-.5 1.500 6-3 1.500z" fill="#cdb7a3"/>
<path d="M40 25l8.500 1.200-.5 3.300-7.500-1.200z" fill="#e3e0d8"/>
<path d="M17.500 10.500l5-2.500 3.500 3-5 2.500z" fill="#6b7a5a"/>
<path d="M23 43h4.500v6H23z" fill="#d9d6cd"/>
</svg>
<div class="t" style="left:606.5px;top:583.5px;font-size:14px;line-height:20px;color:#606266;">主业炒粉兼职…</div>
<div class="t" style="left:635.7px;top:583.5px;font-size:14px;line-height:20px;color:#606266;width:300px;text-align:center;">10.00</div>
<div class="t" style="left:762.5px;top:583.5px;font-size:14px;line-height:20px;color:#606266;width:300px;text-align:center;">9.90</div>
<div class="t" style="left:884.4000000000001px;top:583.5px;font-size:14px;line-height:20px;color:#606266;width:300px;text-align:center;">0.10</div>
<div class="t" style="left:1022.5px;top:583.5px;font-size:14px;line-height:20px;color:#606266;width:300px;text-align:center;">已拒绝</div>
<div class="t" style="left:1757px;top:584.0px;font-size:14px;line-height:20px;color:#273ce2;width:60px;text-align:right;-webkit-text-stroke-width:0.25px;">详情</div>
<div class="t" style="left:1803px;top:584.0px;font-size:14px;line-height:20px;color:#273ce2;width:60px;text-align:right;-webkit-text-stroke-width:0.25px;">备注</div>
<div class="t" style="left:1187.0px;top:583.5px;font-size:14px;line-height:20px;color:#606266;width:300px;text-align:center;">2026-03-04 15:04:52</div>
<div class="t" style="left:1357.0px;top:583.5px;font-size:14px;line-height:20px;color:#606266;width:300px;text-align:center;">2026-03-04 15:05:41</div>
<div class="b" style="left:230px;top:631px;width:1652px;height:1px;background:#ebeef5;"></div>
<svg class="b" style="left:246px;top:644px;overflow:visible;" width="50" height="50" viewBox="0 0 50 50" fill="none">
<rect width="50" height="50" fill="#d6d0c3"/>
<path d="M0 41l16 2v7H0z" fill="#cac7be"/>
<path d="M2.500 11.500L12 9.500 16 12.500V43L2.500 41.500z" fill="#2c433f"/>
<path d="M9 42.500h5V50H9z" fill="#27302d"/>
<path d="M5.500 8.500l8-5 6.500 3.800-8 5.800z" fill="#c4c3b9"/>
<path d="M8 8.600l6-3.600M10 10l6-3.600" stroke="#7d807a" stroke-width=".9"/>
<path d="M17 30l33-3.500V50H17z" fill="#385c45"/>
<path d="M29 27.800l21-2.300v8.500H29z" fill="#4f7b5e"/>
<path d="M34 36v14M43 35v15" stroke="#2f4d3a" stroke-width=".7"/>
<path d="M13.500 13l6.500-3 7.500 3.700 4 5.300-1 11-9.500 3.800-7-2z" fill="#35609e"/>
<path d="M12 16.500l5-1.500 1.500 20-5 .8z" fill="#2f5793"/>
<circle cx="15.500" cy="37" r="1.700" fill="#cfae96"/>
<path d="M20.500 26h9.500l-1 16.500-6 .5z" fill="#3764a3"/>
<path d="M22.500 40.500h6.500l-.2 2.500h-6.200z" fill="#7fa3c6"/>
<path d="M26.500 19.500l11-9 5.500 2 2.500 6-1.500 3.500-4-3-7 5.500z" fill="#3a67a6"/>
<path d="M41.500 19.500l4-.5 1.500 6-3 1.500z" fill="#cdb7a3"/>
<path d="M40 25l8.500 1.200-.5 3.300-7.500-1.200z" fill="#e3e0d8"/>
<path d="M17.500 10.500l5-2.500 3.500 3-5 2.500z" fill="#6b7a5a"/>
<path d="M23 43h4.500v6H23z" fill="#d9d6cd"/>
</svg>
<div class="t" style="left:305.5px;top:658.5px;font-size:14px;line-height:20px;color:#606266;">主业炒粉兼职…</div>
<div class="t" style="left:328.0px;top:658.5px;font-size:14px;line-height:20px;color:#606266;width:300px;text-align:center;">微信零钱</div>
<svg class="b" style="left:547px;top:644px;overflow:visible;" width="50" height="50" viewBox="0 0 50 50" fill="none">
<rect width="50" height="50" fill="#d6d0c3"/>
<path d="M0 41l16 2v7H0z" fill="#cac7be"/>
<path d="M2.500 11.500L12 9.500 16 12.500V43L2.500 41.500z" fill="#2c433f"/>
<path d="M9 42.500h5V50H9z" fill="#27302d"/>
<path d="M5.500 8.500l8-5 6.500 3.800-8 5.800z" fill="#c4c3b9"/>
<path d="M8 8.600l6-3.600M10 10l6-3.600" stroke="#7d807a" stroke-width=".9"/>
<path d="M17 30l33-3.500V50H17z" fill="#385c45"/>
<path d="M29 27.800l21-2.300v8.500H29z" fill="#4f7b5e"/>
<path d="M34 36v14M43 35v15" stroke="#2f4d3a" stroke-width=".7"/>
<path d="M13.500 13l6.500-3 7.500 3.700 4 5.300-1 11-9.500 3.800-7-2z" fill="#35609e"/>
<path d="M12 16.500l5-1.500 1.500 20-5 .8z" fill="#2f5793"/>
<circle cx="15.500" cy="37" r="1.700" fill="#cfae96"/>
<path d="M20.500 26h9.500l-1 16.500-6 .5z" fill="#3764a3"/>
<path d="M22.500 40.500h6.500l-.2 2.500h-6.200z" fill="#7fa3c6"/>
<path d="M26.500 19.500l11-9 5.500 2 2.500 6-1.500 3.500-4-3-7 5.500z" fill="#3a67a6"/>
<path d="M41.500 19.500l4-.5 1.500 6-3 1.500z" fill="#cdb7a3"/>
<path d="M40 25l8.500 1.200-.5 3.300-7.500-1.200z" fill="#e3e0d8"/>
<path d="M17.500 10.500l5-2.500 3.500 3-5 2.500z" fill="#6b7a5a"/>
<path d="M23 43h4.500v6H23z" fill="#d9d6cd"/>
</svg>
<div class="t" style="left:606.5px;top:658.5px;font-size:14px;line-height:20px;color:#606266;">主业炒粉兼职…</div>
<div class="t" style="left:635.7px;top:658.5px;font-size:14px;line-height:20px;color:#606266;width:300px;text-align:center;">10.00</div>
<div class="t" style="left:762.5px;top:658.5px;font-size:14px;line-height:20px;color:#606266;width:300px;text-align:center;">9.90</div>
<div class="t" style="left:884.4000000000001px;top:658.5px;font-size:14px;line-height:20px;color:#606266;width:300px;text-align:center;">0.10</div>
<div class="t" style="left:1022.5px;top:658.5px;font-size:14px;line-height:20px;color:#606266;width:300px;text-align:center;">已拒绝</div>
<div class="t" style="left:1757px;top:659.0px;font-size:14px;line-height:20px;color:#273ce2;width:60px;text-align:right;-webkit-text-stroke-width:0.25px;">详情</div>
<div class="t" style="left:1803px;top:659.0px;font-size:14px;line-height:20px;color:#273ce2;width:60px;text-align:right;-webkit-text-stroke-width:0.25px;">备注</div>
<div class="t" style="left:1187.0px;top:658.5px;font-size:14px;line-height:20px;color:#606266;width:300px;text-align:center;">2026-03-04 14:31:37</div>
<div class="t" style="left:1357.0px;top:658.5px;font-size:14px;line-height:20px;color:#606266;width:300px;text-align:center;">2026-03-04 14:31:50</div>
<div class="b" style="left:230px;top:706px;width:1652px;height:1px;background:#ebeef5;"></div>
<svg class="b" style="left:246px;top:719px;overflow:visible;" width="50" height="50" viewBox="0 0 50 50" fill="none">
<rect width="50" height="50" fill="#d6d0c3"/>
<path d="M0 41l16 2v7H0z" fill="#cac7be"/>
<path d="M2.500 11.500L12 9.500 16 12.500V43L2.500 41.500z" fill="#2c433f"/>
<path d="M9 42.500h5V50H9z" fill="#27302d"/>
<path d="M5.500 8.500l8-5 6.500 3.800-8 5.800z" fill="#c4c3b9"/>
<path d="M8 8.600l6-3.600M10 10l6-3.600" stroke="#7d807a" stroke-width=".9"/>
<path d="M17 30l33-3.500V50H17z" fill="#385c45"/>
<path d="M29 27.800l21-2.300v8.500H29z" fill="#4f7b5e"/>
<path d="M34 36v14M43 35v15" stroke="#2f4d3a" stroke-width=".7"/>
<path d="M13.500 13l6.500-3 7.500 3.700 4 5.300-1 11-9.500 3.800-7-2z" fill="#35609e"/>
<path d="M12 16.500l5-1.500 1.500 20-5 .8z" fill="#2f5793"/>
<circle cx="15.500" cy="37" r="1.700" fill="#cfae96"/>
<path d="M20.500 26h9.500l-1 16.500-6 .5z" fill="#3764a3"/>
<path d="M22.500 40.500h6.500l-.2 2.500h-6.200z" fill="#7fa3c6"/>
<path d="M26.500 19.500l11-9 5.500 2 2.500 6-1.500 3.500-4-3-7 5.500z" fill="#3a67a6"/>
<path d="M41.500 19.500l4-.5 1.500 6-3 1.500z" fill="#cdb7a3"/>
<path d="M40 25l8.500 1.200-.5 3.300-7.500-1.200z" fill="#e3e0d8"/>
<path d="M17.500 10.500l5-2.500 3.500 3-5 2.500z" fill="#6b7a5a"/>
<path d="M23 43h4.500v6H23z" fill="#d9d6cd"/>
</svg>
<div class="t" style="left:305.5px;top:733.5px;font-size:14px;line-height:20px;color:#606266;">主业炒粉兼职…</div>
<div class="t" style="left:328.0px;top:733.5px;font-size:14px;line-height:20px;color:#606266;width:300px;text-align:center;">微信零钱</div>
<svg class="b" style="left:547px;top:719px;overflow:visible;" width="50" height="50" viewBox="0 0 50 50" fill="none">
<rect width="50" height="50" fill="#d6d0c3"/>
<path d="M0 41l16 2v7H0z" fill="#cac7be"/>
<path d="M2.500 11.500L12 9.500 16 12.500V43L2.500 41.500z" fill="#2c433f"/>
<path d="M9 42.500h5V50H9z" fill="#27302d"/>
<path d="M5.500 8.500l8-5 6.500 3.800-8 5.800z" fill="#c4c3b9"/>
<path d="M8 8.600l6-3.600M10 10l6-3.600" stroke="#7d807a" stroke-width=".9"/>
<path d="M17 30l33-3.500V50H17z" fill="#385c45"/>
<path d="M29 27.800l21-2.300v8.500H29z" fill="#4f7b5e"/>
<path d="M34 36v14M43 35v15" stroke="#2f4d3a" stroke-width=".7"/>
<path d="M13.500 13l6.500-3 7.500 3.700 4 5.300-1 11-9.500 3.800-7-2z" fill="#35609e"/>
<path d="M12 16.500l5-1.500 1.500 20-5 .8z" fill="#2f5793"/>
<circle cx="15.500" cy="37" r="1.700" fill="#cfae96"/>
<path d="M20.500 26h9.500l-1 16.500-6 .5z" fill="#3764a3"/>
<path d="M22.500 40.500h6.500l-.2 2.500h-6.200z" fill="#7fa3c6"/>
<path d="M26.500 19.500l11-9 5.500 2 2.500 6-1.500 3.500-4-3-7 5.500z" fill="#3a67a6"/>
<path d="M41.500 19.500l4-.5 1.500 6-3 1.500z" fill="#cdb7a3"/>
<path d="M40 25l8.500 1.200-.5 3.300-7.500-1.200z" fill="#e3e0d8"/>
<path d="M17.500 10.500l5-2.500 3.500 3-5 2.500z" fill="#6b7a5a"/>
<path d="M23 43h4.500v6H23z" fill="#d9d6cd"/>
</svg>
<div class="t" style="left:606.5px;top:733.5px;font-size:14px;line-height:20px;color:#606266;">主业炒粉兼职…</div>
<div class="t" style="left:635.7px;top:733.5px;font-size:14px;line-height:20px;color:#606266;width:300px;text-align:center;">10.00</div>
<div class="t" style="left:762.5px;top:733.5px;font-size:14px;line-height:20px;color:#606266;width:300px;text-align:center;">9.90</div>
<div class="t" style="left:884.4000000000001px;top:733.5px;font-size:14px;line-height:20px;color:#606266;width:300px;text-align:center;">0.10</div>
<div class="t" style="left:1022.5px;top:733.5px;font-size:14px;line-height:20px;color:#606266;width:300px;text-align:center;">已拒绝</div>
<div class="t" style="left:1757px;top:734.0px;font-size:14px;line-height:20px;color:#273ce2;width:60px;text-align:right;-webkit-text-stroke-width:0.25px;">详情</div>
<div class="t" style="left:1803px;top:734.0px;font-size:14px;line-height:20px;color:#273ce2;width:60px;text-align:right;-webkit-text-stroke-width:0.25px;">备注</div>
<div class="t" style="left:1187.0px;top:733.5px;font-size:14px;line-height:20px;color:#606266;width:300px;text-align:center;">2026-03-04 14:30:48</div>
<div class="t" style="left:1357.0px;top:733.5px;font-size:14px;line-height:20px;color:#606266;width:300px;text-align:center;">2026-03-04 14:31:02</div>
<div class="b" style="left:230px;top:781px;width:1652px;height:1px;background:#ebeef5;"></div>
<svg class="b" style="left:246px;top:794px;overflow:visible;" width="50" height="50" viewBox="0 0 50 50" fill="none">
<rect width="50" height="50" fill="#d6d0c3"/>
<path d="M0 41l16 2v7H0z" fill="#cac7be"/>
<path d="M2.500 11.500L12 9.500 16 12.500V43L2.500 41.500z" fill="#2c433f"/>
<path d="M9 42.500h5V50H9z" fill="#27302d"/>
<path d="M5.500 8.500l8-5 6.500 3.800-8 5.800z" fill="#c4c3b9"/>
<path d="M8 8.600l6-3.600M10 10l6-3.600" stroke="#7d807a" stroke-width=".9"/>
<path d="M17 30l33-3.500V50H17z" fill="#385c45"/>
<path d="M29 27.800l21-2.300v8.500H29z" fill="#4f7b5e"/>
<path d="M34 36v14M43 35v15" stroke="#2f4d3a" stroke-width=".7"/>
<path d="M13.500 13l6.500-3 7.500 3.700 4 5.300-1 11-9.500 3.800-7-2z" fill="#35609e"/>
<path d="M12 16.500l5-1.500 1.500 20-5 .8z" fill="#2f5793"/>
<circle cx="15.500" cy="37" r="1.700" fill="#cfae96"/>
<path d="M20.500 26h9.500l-1 16.500-6 .5z" fill="#3764a3"/>
<path d="M22.500 40.500h6.500l-.2 2.500h-6.200z" fill="#7fa3c6"/>
<path d="M26.500 19.500l11-9 5.500 2 2.500 6-1.500 3.500-4-3-7 5.500z" fill="#3a67a6"/>
<path d="M41.500 19.500l4-.5 1.500 6-3 1.500z" fill="#cdb7a3"/>
<path d="M40 25l8.500 1.200-.5 3.300-7.500-1.200z" fill="#e3e0d8"/>
<path d="M17.500 10.500l5-2.500 3.500 3-5 2.500z" fill="#6b7a5a"/>
<path d="M23 43h4.500v6H23z" fill="#d9d6cd"/>
</svg>
<div class="t" style="left:305.5px;top:808.5px;font-size:14px;line-height:20px;color:#606266;">主业炒粉兼职…</div>
<div class="t" style="left:328.0px;top:808.5px;font-size:14px;line-height:20px;color:#606266;width:300px;text-align:center;">微信零钱</div>
<svg class="b" style="left:547px;top:794px;overflow:visible;" width="50" height="50" viewBox="0 0 50 50" fill="none">
<rect width="50" height="50" fill="#d6d0c3"/>
<path d="M0 41l16 2v7H0z" fill="#cac7be"/>
<path d="M2.500 11.500L12 9.500 16 12.500V43L2.500 41.500z" fill="#2c433f"/>
<path d="M9 42.500h5V50H9z" fill="#27302d"/>
<path d="M5.500 8.500l8-5 6.500 3.800-8 5.800z" fill="#c4c3b9"/>
<path d="M8 8.600l6-3.600M10 10l6-3.600" stroke="#7d807a" stroke-width=".9"/>
<path d="M17 30l33-3.500V50H17z" fill="#385c45"/>
<path d="M29 27.800l21-2.300v8.500H29z" fill="#4f7b5e"/>
<path d="M34 36v14M43 35v15" stroke="#2f4d3a" stroke-width=".7"/>
<path d="M13.500 13l6.500-3 7.500 3.700 4 5.300-1 11-9.500 3.800-7-2z" fill="#35609e"/>
<path d="M12 16.500l5-1.500 1.500 20-5 .8z" fill="#2f5793"/>
<circle cx="15.500" cy="37" r="1.700" fill="#cfae96"/>
<path d="M20.500 26h9.500l-1 16.500-6 .5z" fill="#3764a3"/>
<path d="M22.500 40.500h6.500l-.2 2.500h-6.200z" fill="#7fa3c6"/>
<path d="M26.500 19.500l11-9 5.500 2 2.500 6-1.500 3.500-4-3-7 5.500z" fill="#3a67a6"/>
<path d="M41.500 19.500l4-.5 1.500 6-3 1.500z" fill="#cdb7a3"/>
<path d="M40 25l8.500 1.200-.5 3.300-7.500-1.200z" fill="#e3e0d8"/>
<path d="M17.500 10.500l5-2.500 3.500 3-5 2.500z" fill="#6b7a5a"/>
<path d="M23 43h4.500v6H23z" fill="#d9d6cd"/>
</svg>
<div class="t" style="left:606.5px;top:808.5px;font-size:14px;line-height:20px;color:#606266;">主业炒粉兼职…</div>
<div class="t" style="left:635.7px;top:808.5px;font-size:14px;line-height:20px;color:#606266;width:300px;text-align:center;">10.00</div>
<div class="t" style="left:762.5px;top:808.5px;font-size:14px;line-height:20px;color:#606266;width:300px;text-align:center;">9.90</div>
<div class="t" style="left:884.4000000000001px;top:808.5px;font-size:14px;line-height:20px;color:#606266;width:300px;text-align:center;">0.10</div>
<div class="t" style="left:1022.5px;top:796.5px;font-size:14px;line-height:20px;color:#606266;width:300px;text-align:center;">待转账</div>
<div class="t" style="left:1022.5px;top:819.5px;font-size:12px;line-height:20px;color:#67c23a;width:300px;text-align:center;">(等待用户收款)</div>
<div class="t" style="left:1757px;top:797.0px;font-size:14px;line-height:20px;color:#273ce2;width:60px;text-align:right;-webkit-text-stroke-width:0.25px;">取消</div>
<div class="t" style="left:1803px;top:797.0px;font-size:14px;line-height:20px;color:#273ce2;width:60px;text-align:right;-webkit-text-stroke-width:0.25px;">详情</div>
<div class="t" style="left:1803px;top:820.5px;font-size:14px;line-height:20px;color:#273ce2;width:60px;text-align:right;-webkit-text-stroke-width:0.25px;">备注</div>
<div class="t" style="left:1187.0px;top:808.5px;font-size:14px;line-height:20px;color:#606266;width:300px;text-align:center;">2026-03-04 14:29:58</div>
<div class="t" style="left:1357.0px;top:808.5px;font-size:14px;line-height:20px;color:#606266;width:300px;text-align:center;">2026-03-04 14:29:58</div>
<div class="b" style="left:230px;top:856px;width:1652px;height:1px;background:#ebeef5;"></div>
<svg class="b" style="left:246px;top:869px;overflow:visible;" width="50" height="50" viewBox="0 0 50 50" fill="none">
<rect width="50" height="50" fill="#d6d0c3"/>
<path d="M0 41l16 2v7H0z" fill="#cac7be"/>
<path d="M2.500 11.500L12 9.500 16 12.500V43L2.500 41.500z" fill="#2c433f"/>
<path d="M9 42.500h5V50H9z" fill="#27302d"/>
<path d="M5.500 8.500l8-5 6.500 3.800-8 5.800z" fill="#c4c3b9"/>
<path d="M8 8.600l6-3.600M10 10l6-3.600" stroke="#7d807a" stroke-width=".9"/>
<path d="M17 30l33-3.500V50H17z" fill="#385c45"/>
<path d="M29 27.800l21-2.300v8.500H29z" fill="#4f7b5e"/>
<path d="M34 36v14M43 35v15" stroke="#2f4d3a" stroke-width=".7"/>
<path d="M13.500 13l6.500-3 7.500 3.700 4 5.300-1 11-9.500 3.800-7-2z" fill="#35609e"/>
<path d="M12 16.500l5-1.500 1.500 20-5 .8z" fill="#2f5793"/>
<circle cx="15.500" cy="37" r="1.700" fill="#cfae96"/>
<path d="M20.500 26h9.500l-1 16.500-6 .5z" fill="#3764a3"/>
<path d="M22.500 40.500h6.500l-.2 2.500h-6.200z" fill="#7fa3c6"/>
<path d="M26.500 19.500l11-9 5.500 2 2.500 6-1.500 3.500-4-3-7 5.500z" fill="#3a67a6"/>
<path d="M41.500 19.500l4-.5 1.500 6-3 1.500z" fill="#cdb7a3"/>
<path d="M40 25l8.500 1.200-.5 3.300-7.500-1.200z" fill="#e3e0d8"/>
<path d="M17.500 10.500l5-2.500 3.500 3-5 2.500z" fill="#6b7a5a"/>
<path d="M23 43h4.500v6H23z" fill="#d9d6cd"/>
</svg>
<div class="t" style="left:305.5px;top:883.5px;font-size:14px;line-height:20px;color:#606266;">主业炒粉兼职…</div>
<div class="t" style="left:328.0px;top:883.5px;font-size:14px;line-height:20px;color:#606266;width:300px;text-align:center;">微信零钱</div>
<svg class="b" style="left:547px;top:869px;overflow:visible;" width="50" height="50" viewBox="0 0 50 50" fill="none">
<rect width="50" height="50" fill="#d6d0c3"/>
<path d="M0 41l16 2v7H0z" fill="#cac7be"/>
<path d="M2.500 11.500L12 9.500 16 12.500V43L2.500 41.500z" fill="#2c433f"/>
<path d="M9 42.500h5V50H9z" fill="#27302d"/>
<path d="M5.500 8.500l8-5 6.500 3.800-8 5.800z" fill="#c4c3b9"/>
<path d="M8 8.600l6-3.600M10 10l6-3.600" stroke="#7d807a" stroke-width=".9"/>
<path d="M17 30l33-3.500V50H17z" fill="#385c45"/>
<path d="M29 27.800l21-2.300v8.500H29z" fill="#4f7b5e"/>
<path d="M34 36v14M43 35v15" stroke="#2f4d3a" stroke-width=".7"/>
<path d="M13.500 13l6.500-3 7.500 3.700 4 5.300-1 11-9.500 3.800-7-2z" fill="#35609e"/>
<path d="M12 16.500l5-1.500 1.500 20-5 .8z" fill="#2f5793"/>
<circle cx="15.500" cy="37" r="1.700" fill="#cfae96"/>
<path d="M20.500 26h9.500l-1 16.500-6 .5z" fill="#3764a3"/>
<path d="M22.500 40.500h6.500l-.2 2.500h-6.200z" fill="#7fa3c6"/>
<path d="M26.500 19.500l11-9 5.500 2 2.500 6-1.500 3.500-4-3-7 5.500z" fill="#3a67a6"/>
<path d="M41.500 19.500l4-.5 1.500 6-3 1.500z" fill="#cdb7a3"/>
<path d="M40 25l8.500 1.200-.5 3.300-7.500-1.200z" fill="#e3e0d8"/>
<path d="M17.500 10.500l5-2.500 3.500 3-5 2.500z" fill="#6b7a5a"/>
<path d="M23 43h4.500v6H23z" fill="#d9d6cd"/>
</svg>
<div class="t" style="left:606.5px;top:883.5px;font-size:14px;line-height:20px;color:#606266;">主业炒粉兼职…</div>
<div class="t" style="left:635.7px;top:883.5px;font-size:14px;line-height:20px;color:#606266;width:300px;text-align:center;">10.00</div>
<div class="t" style="left:762.5px;top:883.5px;font-size:14px;line-height:20px;color:#606266;width:300px;text-align:center;">9.90</div>
<div class="t" style="left:884.4000000000001px;top:883.5px;font-size:14px;line-height:20px;color:#606266;width:300px;text-align:center;">0.10</div>
<div class="t" style="left:1022.5px;top:883.5px;font-size:14px;line-height:20px;color:#606266;width:300px;text-align:center;">已取消</div>
<div class="t" style="left:1757px;top:884.0px;font-size:14px;line-height:20px;color:#273ce2;width:60px;text-align:right;-webkit-text-stroke-width:0.25px;">详情</div>
<div class="t" style="left:1803px;top:884.0px;font-size:14px;line-height:20px;color:#273ce2;width:60px;text-align:right;-webkit-text-stroke-width:0.25px;">备注</div>
<div class="t" style="left:1187.0px;top:883.5px;font-size:14px;line-height:20px;color:#606266;width:300px;text-align:center;">2026-03-04 14:29:27</div>
<div class="t" style="left:1357.0px;top:883.5px;font-size:14px;line-height:20px;color:#606266;width:300px;text-align:center;">2026-03-04 14:29:27</div>
<div class="b" style="left:230px;top:931px;width:1652px;height:1px;background:#ebeef5;"></div>
<div class="t" style="left:517px;top:944.5px;font-size:14px;line-height:20px;color:#606266;width:100px;text-align:right;">真实姓名：</div>
<div class="t" style="left:617px;top:944.5px;font-size:14px;line-height:20px;color:#606266;">dd</div>
</div>
<svg class="b" style="left:0px;top:946px;overflow:visible;" width="12" height="10" viewBox="0 946 12 10" fill="none"><path d="M.5 947.500A8.500 8.500 0 0 0 9 956" stroke="#9a9a9a" stroke-width="1" fill="none"/></svg>
<svg class="b" style="left:1900px;top:946px;overflow:visible;" width="12" height="10" viewBox="1900 946 12 10" fill="none"><path d="M1911.500 947.500A8.500 8.500 0 0 1 1903 956" stroke="#9a9a9a" stroke-width="1" fill="none"/></svg>
</body></html>
